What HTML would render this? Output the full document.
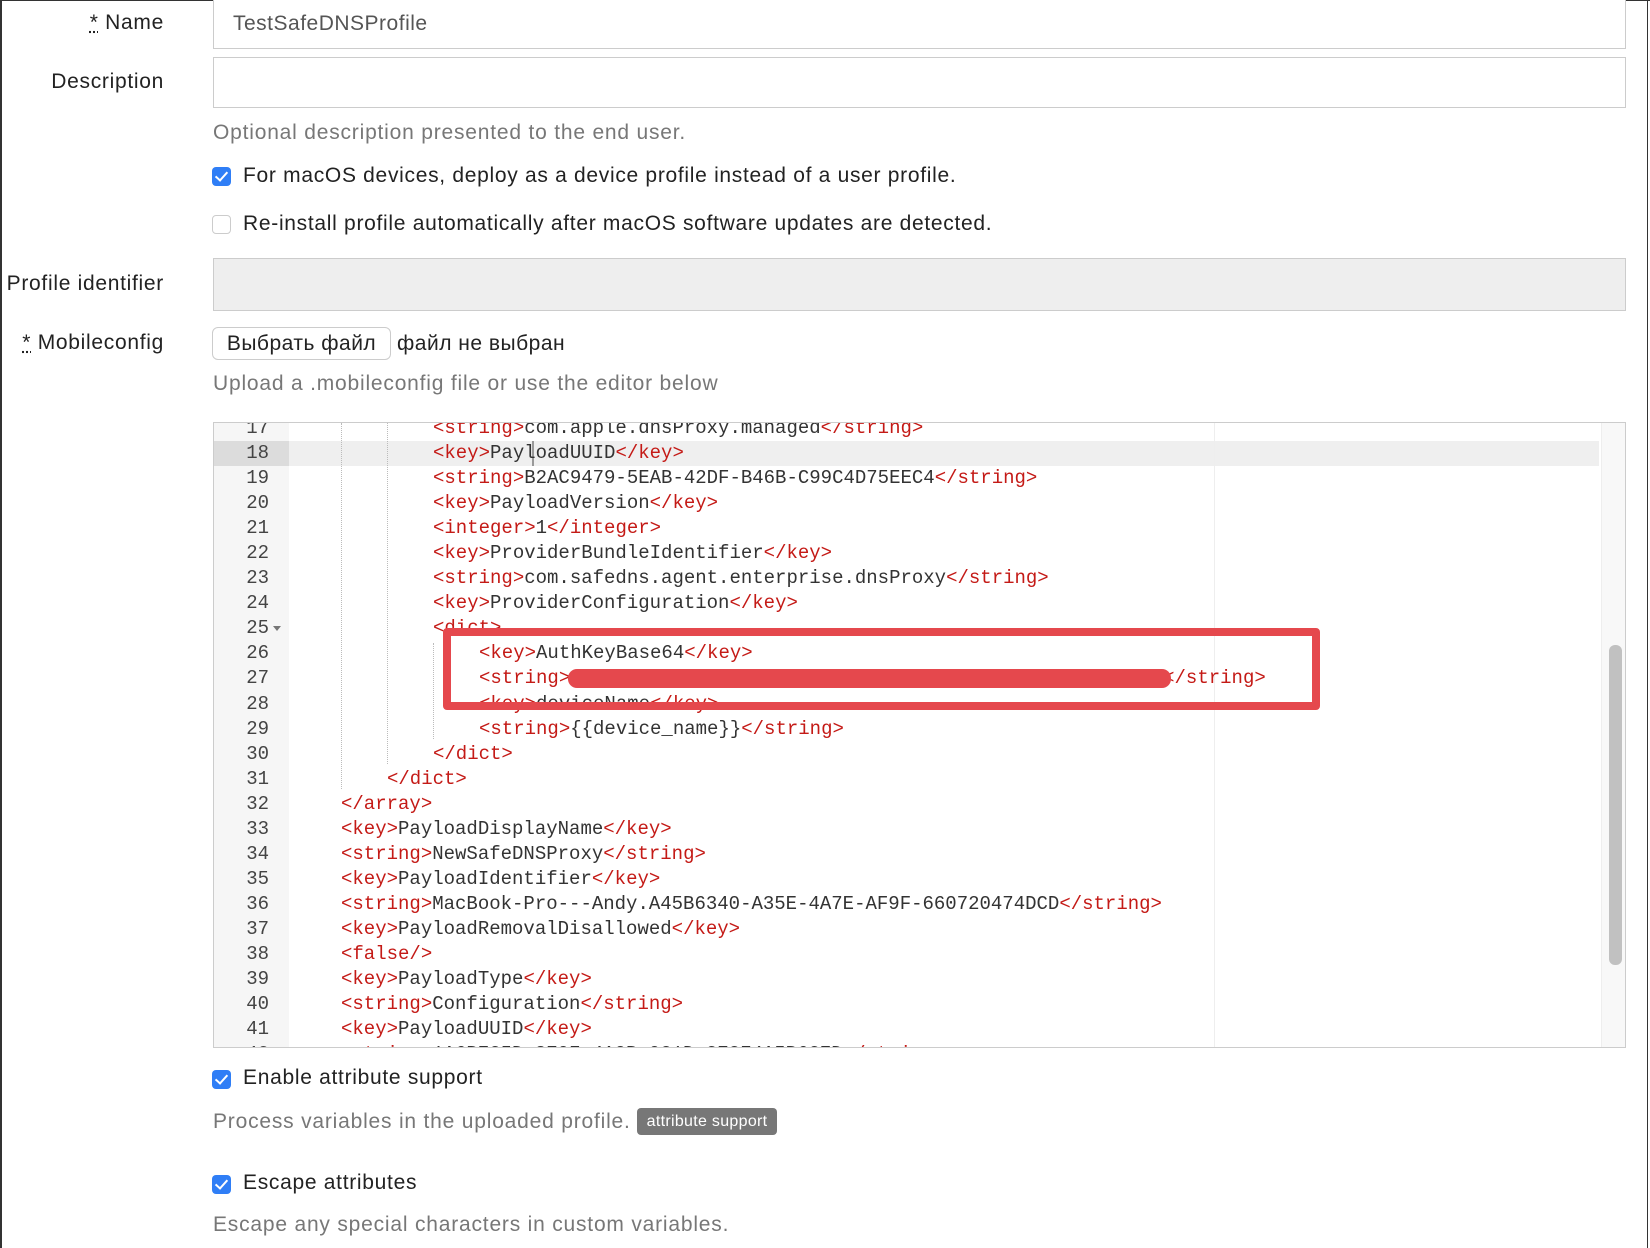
<!DOCTYPE html>
<html><head><meta charset="utf-8"><style>
*{box-sizing:border-box;margin:0;padding:0}
body{width:1650px;height:1248px;overflow:hidden;background:#fff;font-family:"Liberation Sans",sans-serif;color:#222;position:relative}
.a{position:absolute;white-space:nowrap}
.lbl{font-size:21px;right:1486px;text-align:right;letter-spacing:0.7px}
.inp{position:absolute;left:213px;width:1413px;border:1px solid #ccc;background:#fff}
.help{font-size:21px;color:#777;letter-spacing:0.8px}
.cb{position:absolute;width:19px;height:19px;border-radius:4px;left:212px}
.cb.on{background:#2f7ef6}
.cb.off{border:1px solid #ccc;background:#fff}
.cb.on:after{content:"";position:absolute;left:6px;top:2px;width:5px;height:10px;border:solid #fff;border-width:0 2.5px 2.5px 0;transform:rotate(42deg)}
.ct{font-size:21px;left:243px;color:#222;letter-spacing:0.7px}
.code{position:absolute;font-family:"Liberation Mono",monospace;font-size:19px;color:#333;white-space:pre;height:25px;line-height:25px}
.t{color:#c41a16}
.ln{position:absolute;left:0;width:55px;text-align:right;font-family:"Liberation Mono",monospace;font-size:19px;color:#444;height:25px;line-height:25px}
.g{position:absolute;border-left:1px dotted #bbb;width:0}
.badge{display:inline-block;vertical-align:2px;margin-left:6px;padding:0 10px;height:27px;background:#777;border-radius:4px;color:#fff;font-size:16px;line-height:27px;letter-spacing:0.3px}
</style></head><body>
<div style="position:absolute;left:0;top:0;width:1650px;height:1px;background:#333"></div>
<div style="position:absolute;left:0;top:0;width:2px;height:1248px;background:#333"></div>
<div style="position:absolute;left:1647px;top:0;width:1px;height:1248px;background:#333"></div>
<div class="a lbl" style="top:11px"><span style="text-decoration:underline dotted">*</span> Name</div>
<div class="inp" style="top:-1px;height:50px"></div>
<div class="a" style="left:233px;top:12px;font-size:21px;color:#555;letter-spacing:0.5px">TestSafeDNSProfile</div>
<div class="a lbl" style="top:70px">Description</div>
<div class="inp" style="top:57px;height:51px"></div>
<div class="a help" style="left:213px;top:121px">Optional description presented to the end user.</div>
<div class="cb on" style="top:167px"></div>
<div class="a ct" style="top:164px">For macOS devices, deploy as a device profile instead of a user profile.</div>
<div class="cb off" style="top:215px"></div>
<div class="a ct" style="top:212px">Re-install profile automatically after macOS software updates are detected.</div>
<div class="a lbl" style="top:272px">Profile identifier</div>
<div class="inp" style="top:258px;height:53px;background:#eee"></div>
<div class="a lbl" style="top:331px"><span style="text-decoration:underline dotted">*</span> Mobileconfig</div>
<div class="a" style="left:212px;top:327px;width:179px;height:33px;border:1px solid #ccc;border-radius:6px;font-size:21px;text-align:center;line-height:31px;background:#fff;letter-spacing:0.5px">Выбрать файл</div>
<div class="a" style="left:397px;top:332px;font-size:21px;letter-spacing:0.5px">файл не выбран</div>
<div class="a help" style="left:213px;top:372px">Upload a .mobileconfig file or use the editor below</div>

<div style="position:absolute;left:213px;top:422px;width:1413px;height:626px;border:1px solid #ccc;overflow:hidden;background:#fff">
 <div style="position:absolute;left:0;top:0;width:75px;height:100%;background:#f6f6f6"></div>
 <div style="position:absolute;left:75px;top:18px;width:1310px;height:25px;background:#efefef"></div>
 <div style="position:absolute;left:0;top:18px;width:75px;height:25px;background:#dcdcdc"></div>
 <div style="position:absolute;left:1000px;top:0;width:1px;height:100%;background:#eee"></div>
 <div style="position:absolute;left:1387px;top:0;width:26px;height:100%;background:#f8f8f8;border-left:1px solid #eee"></div>
 <div style="position:absolute;left:1395px;top:222px;width:13px;height:320px;background:#c1c1c1;border-radius:6px"></div>
 <div class="g" style="left:127px;top:0;height:366px"></div>
 <div class="g" style="left:173px;top:0;height:341px"></div>
 <div class="g" style="left:219px;top:220px;height:96px"></div>
 <div style="position:absolute;left:318px;top:18px;width:2px;height:25px;background:#999"></div>
 <div id="c"></div>
</div>
<div class="a" style="left:443px;top:628px;width:877px;height:82px;border:8px solid #e5484d;border-radius:4px"></div>
<div class="a" style="left:568px;top:669px;width:603px;height:19px;background:#e5484d;border-radius:9px"></div>

<div class="cb on" style="top:1070px"></div>
<div class="a ct" style="top:1066px">Enable attribute support</div>
<div class="a help" style="left:213px;top:1108px">Process variables in the uploaded profile.<span class="badge">attribute support</span></div>
<div class="cb on" style="top:1175px"></div>
<div class="a ct" style="top:1171px">Escape attributes</div>
<div class="a help" style="left:213px;top:1213px">Escape any special characters in custom variables.</div>
<script>
var L=[[17,219,'<string>','com.apple.dnsProxy.managed','</string>'],
[18,219,'<key>','PayloadUUID','</key>'],
[19,219,'<string>','B2AC9479-5EAB-42DF-B46B-C99C4D75EEC4','</string>'],
[20,219,'<key>','PayloadVersion','</key>'],
[21,219,'<integer>','1','</integer>'],
[22,219,'<key>','ProviderBundleIdentifier','</key>'],
[23,219,'<string>','com.safedns.agent.enterprise.dnsProxy','</string>'],
[24,219,'<key>','ProviderConfiguration','</key>'],
[25,219,'<dict>','',''],
[26,265,'<key>','AuthKeyBase64','</key>'],
[27,265,'<string>','                                                    ','</string>'],
[28,265,'<key>','deviceName','</key>'],
[29,265,'<string>','{{device_name}}','</string>'],
[30,219,'</dict>','',''],
[31,173,'</dict>','',''],
[32,127,'</array>','',''],
[33,127,'<key>','PayloadDisplayName','</key>'],
[34,127,'<string>','NewSafeDNSProxy','</string>'],
[35,127,'<key>','PayloadIdentifier','</key>'],
[36,127,'<string>','MacBook-Pro---Andy.A45B6340-A35E-4A7E-AF9F-660720474DCD','</string>'],
[37,127,'<key>','PayloadRemovalDisallowed','</key>'],
[38,127,'<false/>','',''],
[39,127,'<key>','PayloadType','</key>'],
[40,127,'<string>','Configuration','</string>'],
[41,127,'<key>','PayloadUUID','</key>'],
[42,127,'<string>','1A6B7C5D-8E9F-4A0B-9C1D-2E3F4A5B6C7D','</string>']];
function e(s){return s.replace(/&/g,'&amp;').replace(/</g,'&lt;')}
var h='';L.forEach(function(l){var top=(l[0]-18)*25.05+18;
h+='<div class="ln" style="top:'+top+'px">'+l[0]+'</div>';
if(l[0]==25)h+='<div style="position:absolute;left:59px;top:'+(top+10)+'px;border:4px solid transparent;border-top:5px solid #777"></div>';
h+='<div class="code" style="left:'+l[1]+'px;top:'+top+'px"><span class="t">'+e(l[2])+'</span>'+e(l[3])+'<span class="t">'+e(l[4])+'</span></div>';});
document.getElementById('c').innerHTML=h;
</script>
</body></html>
